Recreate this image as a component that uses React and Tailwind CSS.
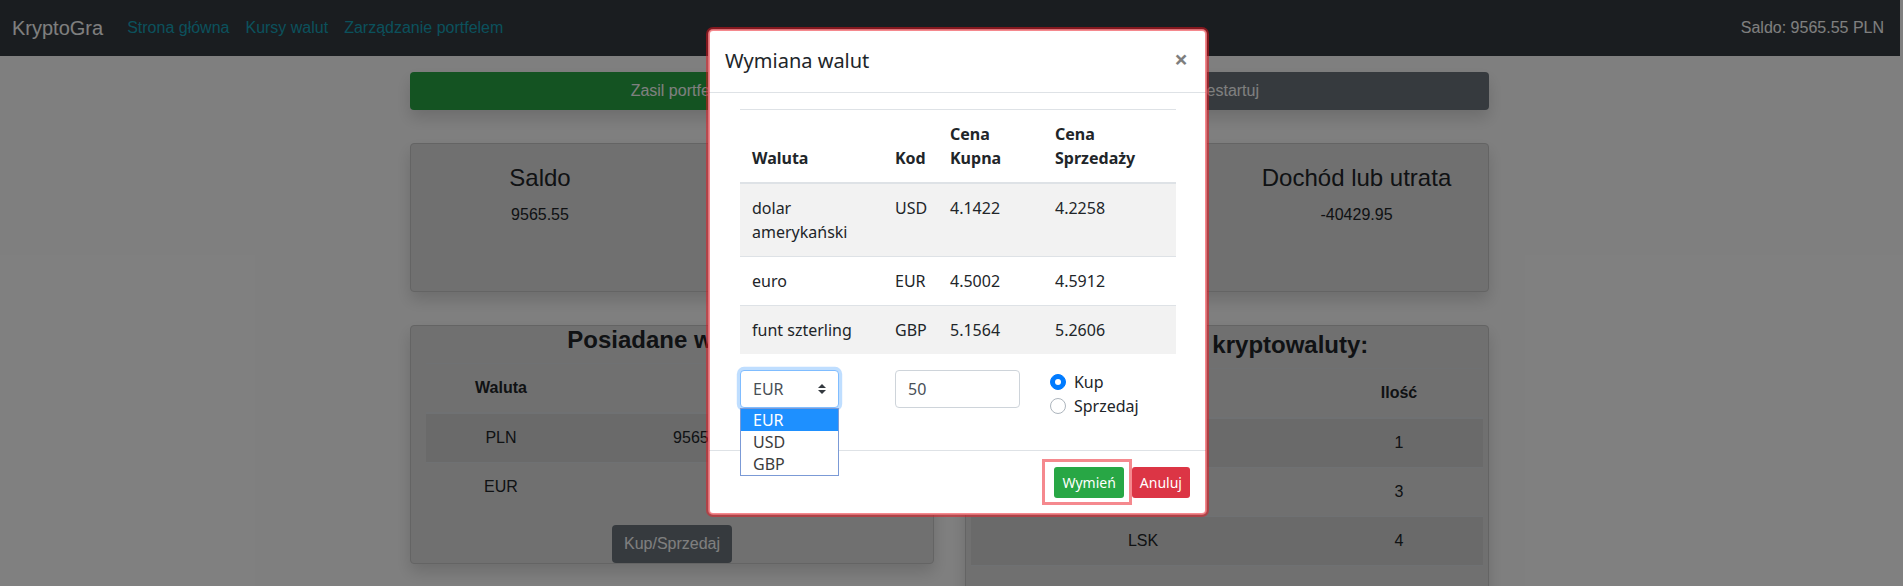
import React from "react";

function BgTable({ cols, head, rows, extraRow }) {
  return (
    <table className="w-full table-fixed border-collapse text-[16px] text-center">
      <colgroup>
        {cols.map((w, i) => (
          <col key={i} style={{ width: w }} />
        ))}
      </colgroup>
      <thead>
        <tr>
          {head.map((h, i) => (
            <th key={i} className="p-3 leading-6 font-bold border-t border-b-2 border-[#dee2e6] align-bottom">
              {h || "\u00a0"}
            </th>
          ))}
        </tr>
      </thead>
      <tbody>
        {rows.map((r, i) => (
          <tr key={i} className={i % 2 === 0 ? "bg-black/5" : ""}>
            {r.map((c, j) => (
              <td key={j} className="p-3 leading-6 border-t border-[#dee2e6]">
                {c || "\u00a0"}
              </td>
            ))}
          </tr>
        ))}
        {extraRow && (
          <tr>
            {head.map((_, j) => (
              <td key={j} className="p-3 leading-6 border-t border-[#dee2e6]">
                &nbsp;
              </td>
            ))}
          </tr>
        )}
      </tbody>
    </table>
  );
}

export default function App() {
  return (
    <div className="relative w-[1903px] h-[586px] overflow-hidden bg-white font-['Liberation_Sans',Arial,sans-serif] text-[#212529]">
      <div className="w-[1900px]">
        <nav className="h-14 bg-[#343a40] flex items-center pl-3 pr-4 text-[16px]">
          <span className="text-[20px] leading-[30px] text-white mr-4">KryptoGra</span>
          <span className="px-2 text-[#17a2b8]">Strona główna</span>
          <span className="px-2 text-[#17a2b8]">Kursy walut</span>
          <span className="px-2 text-[#17a2b8]">Zarządzanie portfelem</span>
          <span className="ml-auto text-white">Saldo: 9565.55 PLN</span>
        </nav>

        <main className="ml-[410px] w-[1079px]">
          <div className="grid grid-cols-2 gap-[31px] mt-4">
            <div className="h-[38px] rounded bg-[#28a745] text-white flex items-center justify-center shadow-[0_8px_16px_rgba(0,0,0,0.15)]">
              Zasil portfel
            </div>
            <div className="h-[38px] rounded bg-[#6c757d] text-white flex items-center justify-center shadow-[0_8px_16px_rgba(0,0,0,0.15)]">
              Restartuj
            </div>
          </div>

          <div className="mt-[33px] h-[149px] rounded border border-[#c8c8c8] bg-[#e0e0e0] pt-5 grid grid-cols-4 gap-[15px] text-center shadow-[0_8px_16px_rgba(0,0,0,0.15)]">
            <div>
              <h4 className="text-[24px] leading-[28.8px] font-normal mb-[10px]">Saldo</h4>
              <p className="text-[16px] leading-6">9565.55</p>
            </div>
            <div />
            <div />
            <div className="pr-[5px]">
              <h4 className="text-[24px] leading-[28.8px] font-normal mb-[10px]">Dochód lub utrata</h4>
              <p className="text-[16px] leading-6">-40429.95</p>
            </div>
          </div>

          <div className="mt-[33px] grid grid-cols-2 gap-[31px] items-start">
            <div className="rounded border border-[#c8c8c8] bg-[#e0e0e0] flex flex-col items-center shadow-[0_8px_16px_rgba(0,0,0,0.15)]">
              <h4 className="text-[24px] leading-[28.8px] font-bold mb-2">Posiadane waluty:</h4>
              <div className="w-full px-[15px] mb-[14px]">
                <BgTable
                  cols={["150px", "252px", "90px"]}
                  head={["Waluta", "", ""]}
                  rows={[
                    ["PLN", "9565.55", ""],
                    ["EUR", "", ""],
                  ]}
                />
              </div>
              <div className="h-[38px] px-3 rounded bg-[#6c757d] text-white flex items-center">Kup/Sprzedaj</div>
            </div>

            <div className="rounded border border-[#c8c8c8] bg-[#e0e0e0] p-[5px] flex flex-col items-center shadow-[0_8px_16px_rgba(0,0,0,0.15)]">
              <h4 className="text-[24px] leading-[28.8px] font-bold mb-2">Posiadane kryptowaluty:</h4>
              <BgTable
                cols={["344px", "168px"]}
                head={["", "Ilość"]}
                rows={[
                  ["", "1"],
                  ["", "3"],
                  ["LSK", "4"],
                ]}
                extraRow
              />
            </div>
          </div>
        </main>
      </div>

      {/* modal backdrop */}
      <div className="absolute inset-0 bg-black/50" />

      {/* modal */}
      <div className="absolute left-[708px] top-[29px] w-[499px] bg-white rounded-[5px] border border-black/20 outline-4 outline-[rgba(235,20,30,0.5)] -outline-offset-2 font-['Noto_Sans','Open_Sans',sans-serif] text-[#212529] text-[16px]">
        <div className="flex items-start justify-between p-4 border-b border-[#dee2e6]">
          <h5 className="text-[20px] leading-[30px] font-normal">Wymiana walut</h5>
          <span className="-m-4 ml-auto p-4 pt-[17px] pr-[18px] text-[24px] leading-none font-bold text-black opacity-50">×</span>
        </div>

        <div className="p-4">
          <div className="px-[15px]">
            <table className="w-full table-fixed border-collapse mb-4 text-left">
              <colgroup>
                <col style={{ width: "143px" }} />
                <col style={{ width: "55px" }} />
                <col style={{ width: "105px" }} />
                <col style={{ width: "133px" }} />
              </colgroup>
              <thead>
                <tr>
                  {["Waluta", "Kod", "Cena Kupna", "Cena Sprzedaży"].map((h) => (
                    <th key={h} className="p-3 leading-6 font-bold align-bottom border-t border-b-2 border-[#dee2e6]">
                      {h}
                    </th>
                  ))}
                </tr>
              </thead>
              <tbody>
                {[
                  ["dolar amerykański", "USD", "4.1422", "4.2258"],
                  ["euro", "EUR", "4.5002", "4.5912"],
                  ["funt szterling", "GBP", "5.1564", "5.2606"],
                ].map((r, i) => (
                  <tr key={r[1]} className={i % 2 === 0 ? "bg-[#f2f2f2]" : ""}>
                    {r.map((c, j) => (
                      <td key={j} className={"leading-6 align-top border-t border-[#dee2e6] " + (j === 1 ? "py-3 pl-3 pr-0" : "p-3")}>
                        {c}
                      </td>
                    ))}
                  </tr>
                ))}
              </tbody>
            </table>

            <div className="flex -mx-[15px] mb-4">
              <div className="w-1/3 px-[15px]">
                <div className="relative w-[99px]">
                  <div className="h-[38px] w-[99px] flex items-center pl-3 pr-3 border border-[#80bdff] rounded-[4px] shadow-[0_0_0_3.2px_rgba(0,123,255,0.25)] bg-white text-[#495057]">
                    <span className="flex-1 leading-6">EUR</span>
                    <svg width="8" height="10" viewBox="0 0 4 5" className="shrink-0">
                      <path fill="#343a40" d="M2 0L0 2h4zm0 5L0 3h4z" />
                    </svg>
                  </div>
                  <div className="absolute left-0 top-full w-[99px] border border-[#7b9ad6] bg-white text-[#3c3c3c]">
                    <div className="h-[22px] pl-3 leading-[22px] bg-[#1e90ff] text-white">EUR</div>
                    <div className="h-[22px] pl-3 leading-[22px]">USD</div>
                    <div className="h-[22px] pl-3 leading-[22px]">GBP</div>
                  </div>
                </div>
              </div>
              <div className="w-1/3 px-[15px]">
                <div className="h-[38px] w-[125px] flex items-center px-3 border border-[#ced4da] rounded-[4px] text-[#495057]">
                  50
                </div>
              </div>
              <div className="w-1/3 px-[15px]">
                <div className="relative pl-6 leading-6">
                  <span className="absolute left-0 top-1 w-4 h-4 rounded-full bg-[#007bff] border border-[#007bff] flex items-center justify-center">
                    <span className="w-[6px] h-[6px] rounded-full bg-white" />
                  </span>
                  Kup
                </div>
                <div className="relative pl-6 leading-6">
                  <span className="absolute left-0 top-1 w-4 h-4 rounded-full bg-white border border-[#adb5bd]" />
                  Sprzedaj
                </div>
              </div>
            </div>
          </div>
        </div>

        <div className="flex items-center justify-end p-3 border-t border-[#dee2e6]">
          <div className="relative m-1">
            <div className="h-[31px] px-2 rounded-[3px] bg-[#28a745] text-white text-[14px] leading-[21px] flex items-center">
              Wymień
            </div>
            <div className="absolute -left-[12px] -top-[8px] -right-[8px] -bottom-[7px] border-[3px] border-[rgba(235,20,30,0.5)]" />
          </div>
          <div className="m-1 h-[31px] px-2 rounded-[3px] bg-[#dc3545] text-white text-[14px] leading-[21px] flex items-center">
            Anuluj
          </div>
        </div>
      </div>
    </div>
  );
}
